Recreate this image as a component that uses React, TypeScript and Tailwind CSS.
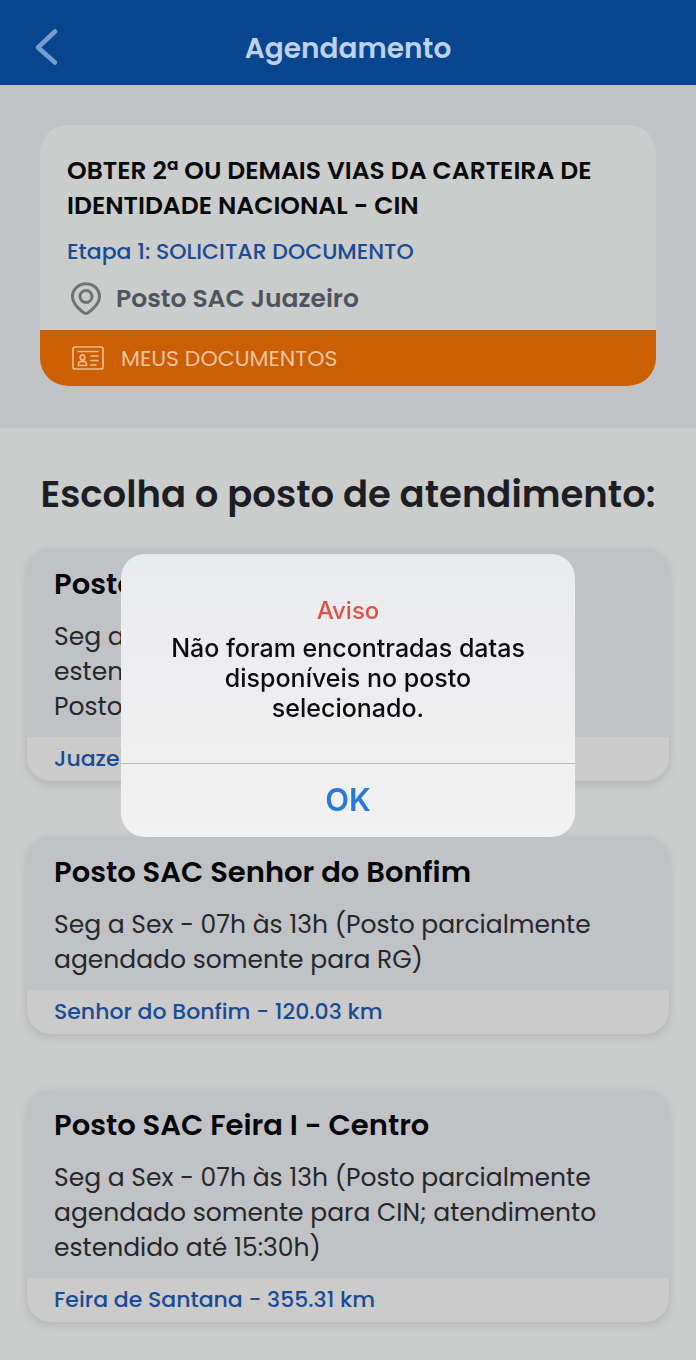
import React, { useState } from 'react';

interface ServicePost {
  name: string;
  schedule: string[];
  location: string;
}

const posts: ServicePost[] = [
  {
    name: 'Posto SAC Juazeiro',
    schedule: ['Seg a Sex - 07h às 13h (atendimento', 'estendido até 15:30h)', 'Posto parcialmente agendado'],
    location: 'Juazeiro - 0.00 km'
  },
  {
    name: 'Posto SAC Senhor do Bonfim',
    schedule: ['Seg a Sex - 07h às 13h (Posto parcialmente', 'agendado somente para RG)'],
    location: 'Senhor do Bonfim - 120.03 km'
  },
  {
    name: 'Posto SAC Feira I - Centro',
    schedule: ['Seg a Sex - 07h às 13h (Posto parcialmente', 'agendado somente para CIN; atendimento', 'estendido até 15:30h)'],
    location: 'Feira de Santana - 355.31 km'
  }
];

const PinIcon: React.FC = () => (
  <svg width="32" height="34" viewBox="0 0 32 34" fill="none" stroke="#6f7375" strokeWidth="3" aria-hidden="true">
    <path d="M16 31.5C14.5 31.5 2.5 23.5 2.5 14.5a13.5 12.8 0 0 1 27 0C29.5 23.5 17.5 31.5 16 31.5Z" strokeLinejoin="round" />
    <circle cx="16" cy="14.5" r="6" />
  </svg>
);

const IdCardIcon: React.FC = () => (
  <svg width="32" height="24" viewBox="0 0 32 24" fill="none" stroke="#f3b98c" strokeWidth="1.7" strokeLinecap="round" aria-hidden="true">
    <rect x="1" y="1" width="30" height="22" rx="2" />
    <path d="M6 5.5h20M19 10h7M19 14.5h7M19 19h5" />
    <ellipse cx="10.5" cy="11.5" rx="2.3" ry="2.6" />
    <path d="M6.5 19.5V18c0-1.6 1-2.4 2.5-2.8 1 .9 2 .9 3 0 1.5.4 2.5 1.2 2.5 2.8v1.5Z" strokeLinejoin="round" />
  </svg>
);

const PostCard: React.FC<{ post: ServicePost }> = ({ post }) => (
  <button
    type="button"
    className="block w-full text-left rounded-3xl overflow-hidden bg-[#cbcbcb] shadow-[0_3px_10px_rgba(0,0,0,0.12)]"
  >
    <div className="bg-[#c1c2c6] px-[27px] pt-4 pb-[13px]">
      <h3 className="text-[29px] leading-10 font-semibold text-[#050608] whitespace-nowrap">{post.name}</h3>
      <p className="mt-[15px] text-[25px] leading-[35px] text-[#26272b] whitespace-nowrap">
        {post.schedule.map((line) => (
          <span key={line} className="block">{line}</span>
        ))}
      </p>
    </div>
    <p className="px-[27px] text-[22px] leading-11 font-medium text-[#1a4b94]">{post.location}</p>
  </button>
);

export default function App() {
  const [alertOpen, setAlertOpen] = useState(true);

  return (
    <div className="min-h-screen bg-[#cbcdcc] font-['Poppins','Inter',sans-serif]">
      <header className="relative flex items-center justify-center h-[85px] pt-3 bg-[#07458f]">
        <button type="button" aria-label="Voltar" className="absolute left-8 top-7">
          <svg width="28" height="38" viewBox="0 0 28 38" fill="none" stroke="#769dce" strokeWidth="4.6" strokeLinecap="round" strokeLinejoin="round">
            <path d="M23 3.5 6 19.5 23 34.5" />
          </svg>
        </button>
        <h1 className="text-[28px] leading-10 font-semibold text-[#bdd0ec]">Agendamento</h1>
      </header>

      <section className="bg-[#c1c2c6] px-10 pt-10 pb-[42px]">
        <div className="rounded-[28px] overflow-hidden bg-[#cbcdcc]">
          <div className="px-[27px] pt-7 pb-3">
            <h2 className="text-[25px] leading-[35px] font-semibold text-[#08090a] whitespace-nowrap">
              OBTER 2ª OU DEMAIS VIAS DA CARTEIRA DE
              <br />
              IDENTIDADE NACIONAL - CIN
            </h2>
            <p className="mt-[13px] text-[22px] leading-8 font-medium text-[#1a4b94]">Etapa 1: SOLICITAR DOCUMENTO</p>
            <div className="mt-3 flex items-center gap-3.5 pl-[3px]">
              <PinIcon />
              <span className="text-[25px] leading-[38px] font-semibold text-[#50545f]">Posto SAC Juazeiro</span>
            </div>
          </div>
          <button type="button" className="flex w-full items-center gap-[17px] h-14 px-8 bg-[#ca5f04] text-[22px] text-[#f3c39f]">
            <IdCardIcon />
            MEUS DOCUMENTOS
          </button>
        </div>
      </section>

      <main className="px-[27px] pt-10 pb-9">
        <h2 className="mb-7 text-center text-[37px] leading-[52px] font-semibold text-[#1c1e24] whitespace-nowrap">
          Escolha o posto de atendimento:
        </h2>
        <div className="flex flex-col gap-[55px]">
          {posts.map((post) => (
            <PostCard key={post.name} post={post} />
          ))}
        </div>
      </main>

      {alertOpen && (
        <div className="fixed inset-0 z-50 flex items-center justify-center px-4 pt-[30px]">
          <div
            role="alertdialog"
            aria-labelledby="alert-title"
            aria-describedby="alert-message"
            className="w-full max-w-[454px] rounded-3xl overflow-hidden bg-linear-to-b from-[#eaebee] to-[#f1f1f1] text-center font-['Inter',sans-serif]"
          >
            <div className="px-10 pt-10 pb-10">
              <h2 id="alert-title" className="text-[24px] leading-[34px] font-medium text-[#e2504a]">Aviso</h2>
              <p id="alert-message" className="mt-[5px] text-[25px] leading-[30px] font-medium text-[#0b0c0e]">
                Não foram encontradas datas disponíveis no posto selecionado.
              </p>
            </div>
            <button
              type="button"
              onClick={() => setAlertOpen(false)}
              className="block w-full h-[74px] border-t border-[#b4b6b9] text-[31px] font-semibold text-[#2878da]"
            >
              OK
            </button>
          </div>
        </div>
      )}
    </div>
  );
}
